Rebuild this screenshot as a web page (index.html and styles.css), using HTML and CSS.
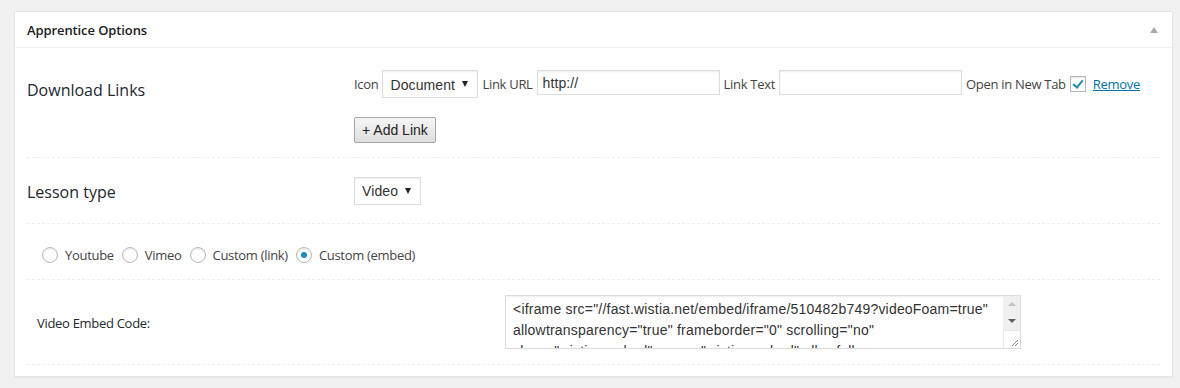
FILE: index.html
```html
<!DOCTYPE html>
<html lang="en">
<head>
    <meta charset="UTF-8">
    <title>Apprentice Options</title>
    <link rel="stylesheet" href="styles.css">
</head>
<body>
    <div class="postbox">
        <div class="postbox-header">
            <h2>Apprentice Options</h2>
            <span class="toggle-arrow"></span>
        </div>
        <div class="inside">
            <div class="field-row row-links">
                <div class="field-label big">Download Links</div>
                <div class="field-body">
                    <div class="link-line">
                        <span class="lbl">Icon</span>
                        <span class="select-wrap w-doc">
                            <select class="select"><option>Document</option></select>
                        </span>
                        <span class="lbl">Link URL</span>
                        <input type="text" class="text-input" value="http://">
                        <span class="lbl">Link Text</span>
                        <input type="text" class="text-input">
                        <span class="lbl">Open in New Tab</span>
                        <input type="checkbox" class="check" checked>
                        <a href="#" class="remove">Remove</a>
                    </div>
                    <button class="button">+ Add Link</button>
                </div>
            </div>

            <div class="field-row row-type">
                <div class="field-label big">Lesson type</div>
                <div class="field-body">
                    <span class="select-wrap w-video">
                        <select class="select"><option>Video</option></select>
                    </span>
                </div>
            </div>

            <div class="field-row row-radios">
                <label class="radio-item"><input type="radio" name="vt"> Youtube</label>
                <label class="radio-item"><input type="radio" name="vt"> Vimeo</label>
                <label class="radio-item"><input type="radio" name="vt"> Custom (link)</label>
                <label class="radio-item"><input type="radio" name="vt" checked> Custom (embed)</label>
            </div>

            <div class="field-row row-embed">
                <div class="field-label small">Video Embed Code:</div>
                <div class="field-body">
                    <div class="embed-box">
                        <textarea class="embed">&lt;iframe src="//fast.wistia.net/embed/iframe/510482b749?videoFoam=true" allowtransparency="true" frameborder="0" scrolling="no" class="wistia_embed" name="wistia_embed" allowfullscreen mozallowfullscreen webkitallowfullscreen oallowfullscreen msallowfullscreen width="640" height="360"&gt;&lt;/iframe&gt;</textarea>
                        <div class="scrollbar">
                            <span class="sb-btn sb-up"></span>
                            <span class="sb-btn sb-down"></span>
                            <span class="sb-corner">
                                <svg width="8" height="8" viewBox="0 0 8 8">
                                    <path d="M1 7 L7 1 M4 7 L7 4" stroke="#888" stroke-width="1" fill="none"/>
                                </svg>
                            </span>
                        </div>
                    </div>
                </div>
            </div>
        </div>
    </div>
</body>
</html>
```

FILE: styles.css
```css
body {
    margin: 0;
    padding: 11px 7px 12px 14px;
    background-color: #f1f1f1;
    font-family: "Open Sans", "Liberation Sans", sans-serif;
    font-size: 13px;
    letter-spacing: -0.3px;
    color: #444;
}
.postbox {
    background-color: #fff;
    border: 1px solid #e5e5e5;
    box-shadow: 0 1px 1px rgba(0,0,0,0.04);
}
.postbox-header {
    display: flex;
    align-items: center;
    justify-content: space-between;
    height: 35px;
    padding: 0 14px 0 12px;
    border-bottom: 1px solid #eee;
}
.postbox-header h2 {
    margin: 0;
    font-size: 13px;
    font-weight: 600;
    letter-spacing: -0.1px;
    color: #222;
}
.toggle-arrow {
    width: 0;
    height: 0;
    border-left: 4px solid transparent;
    border-right: 4px solid transparent;
    border-bottom: 6px solid #aaa;
}
.inside {
    padding: 0 12px 11px 12px;
}
.field-row {
    display: flex;
    border-bottom: 1px dashed #eee;
}
.field-label {
    width: 327px;
    flex-shrink: 0;
    color: #23282d;
}
.field-label.big {
    font-size: 16px;
    letter-spacing: 0;
}
.field-label.small {
    font-size: 13px;
    padding-left: 10px;
    width: 468px;
    align-self: center;
    padding-top: 2px;
}
.row-links {
    padding: 22px 0 14px;
}
.row-links .field-label {
    padding-top: 9px;
}
.link-line {
    display: flex;
    align-items: center;
    gap: 4px;
    margin-bottom: 19px;
}
.lbl {
    color: #444;
}
.select-wrap {
    position: relative;
    display: inline-block;
}
.select-wrap::after {
    content: "";
    position: absolute;
    right: 10px;
    top: 50%;
    margin-top: -3px;
    border-left: 3px solid transparent;
    border-right: 3px solid transparent;
    border-top: 6px solid #222;
    pointer-events: none;
}
.select {
    -webkit-appearance: none;
    appearance: none;
    height: 28px;
    padding: 0 22px 0 7px;
    border: 1px solid #ddd;
    border-radius: 0;
    box-shadow: inset 0 1px 2px rgba(0,0,0,0.07);
    background-color: #fff;
    font-family: "Liberation Sans", Arial, sans-serif;
    font-size: 14px;
    letter-spacing: 0.1px;
    color: #333;
}
.w-doc .select {
    width: 96px;
    padding-top: 2px;
}
.w-video .select {
    width: 67px;
    height: 28px;
}
.text-input {
    width: 183px;
    height: 25px;
    box-sizing: border-box;
    padding: 0 5px;
    border: 1px solid #ddd;
    box-shadow: inset 0 1px 2px rgba(0,0,0,0.07);
    font-family: "Liberation Sans", Arial, sans-serif;
    font-size: 14px;
    letter-spacing: 0.1px;
    color: #333;
    margin-top: -3px;
}
.check {
    -webkit-appearance: none;
    appearance: none;
    position: relative;
    width: 16px;
    height: 16px;
    margin: 0;
    border: 1px solid #b4b9be;
    background: #fff;
    box-shadow: inset 0 1px 2px rgba(0,0,0,0.1);
}
.check:checked::before {
    content: "";
    position: absolute;
    left: 4px;
    top: 1px;
    width: 4px;
    height: 8px;
    border-right: 2px solid #1e8cbe;
    border-bottom: 2px solid #1e8cbe;
    transform: rotate(40deg);
}
.remove {
    margin-left: 3px;
    color: #0073aa;
}
.button {
    height: 26px;
    padding: 0 7px;
    border: 1px solid #a6a6a6;
    border-radius: 2px;
    background: linear-gradient(#f6f6f6, #dedede);
    font-family: "Liberation Sans", Arial, sans-serif;
    font-size: 14px;
    color: #222;
}
.row-type {
    padding: 19px 0 18px;
}
.row-type .field-label {
    padding-top: 4px;
}
.row-radios {
    padding: 22px 0 15px 15px;
    gap: 8px;
}
.radio-item {
    display: flex;
    align-items: center;
    gap: 7px;
    color: #444;
}
.radio-item input {
    -webkit-appearance: none;
    appearance: none;
    position: relative;
    width: 16px;
    height: 16px;
    margin: 0;
    border: 1px solid #b4b9be;
    border-radius: 50%;
    background: #fff;
    box-shadow: inset 0 1px 2px rgba(0,0,0,0.1);
}
.radio-item input:checked::before {
    content: "";
    position: absolute;
    left: 4px;
    top: 4px;
    width: 6px;
    height: 6px;
    border-radius: 50%;
    background: #1e8cbe;
}
.row-embed {
    padding: 15px 0 15px;
}
.embed-box {
    display: flex;
    width: 516px;
    height: 54px;
    box-sizing: border-box;
    border: 1px solid #ddd;
    box-shadow: inset 0 1px 2px rgba(0,0,0,0.07);
    background: #fff;
}
.embed {
    flex: 1;
    box-sizing: border-box;
    padding: 3px 6px 0 7px;
    border: none;
    background: transparent;
    font-family: "Liberation Sans", Arial, sans-serif;
    font-size: 14px;
    letter-spacing: 0.2px;
    line-height: 21px;
    color: #333;
    overflow: hidden;
    resize: none;
    outline: none;
}
.scrollbar {
    width: 17px;
    display: flex;
    flex-direction: column;
    background: #f0f0f0;
}
.sb-btn {
    position: relative;
    height: 17px;
}
.sb-btn::before {
    content: "";
    position: absolute;
    left: 5px;
    top: 6px;
    border-left: 4px solid transparent;
    border-right: 4px solid transparent;
}
.sb-up::before {
    border-bottom: 4px solid #c2c2c2;
}
.sb-down::before {
    border-top: 4px solid #606060;
}
.sb-corner {
    flex: 1;
    display: flex;
    align-items: flex-end;
    justify-content: flex-end;
    padding: 0 1px 1px 0;
    background: #fff;
    border-top: 1px solid #e8e8e8;
    border-left: 1px solid #e8e8e8;
}
```
